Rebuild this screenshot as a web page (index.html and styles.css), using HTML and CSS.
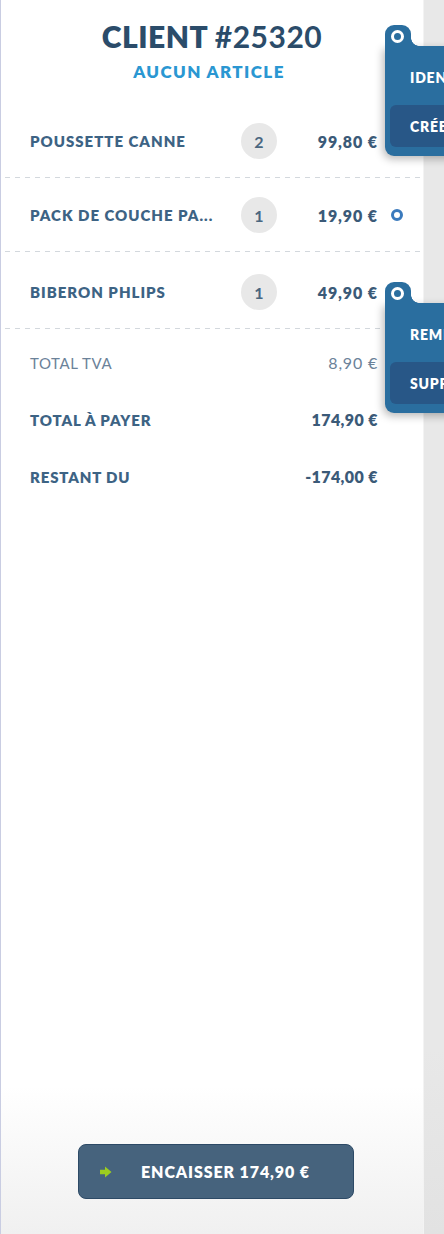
FILE: index.html
```html
<!DOCTYPE html>
<html lang="fr">
<head>
<meta charset="utf-8">
<title>Client #25320</title>
<link rel="stylesheet" href="styles.css">
</head>
<body>
<div class="page">
  <section class="panel">
    <header class="head">
      <h1 class="title">CLIENT <span class="num">#25320</span></h1>
      <p class="subtitle">AUCUN ARTICLE</p>
    </header>

    <ul class="items">
      <li class="item">
        <span class="name">POUSSETTE CANNE</span>
        <span class="qty">2</span>
        <span class="price">99,80 €</span>
        <span class="ring"></span>
      </li>
      <li class="item">
        <span class="name">PACK DE COUCHE PA...</span>
        <span class="qty">1</span>
        <span class="price">19,90 €</span>
        <span class="ring"></span>
      </li>
      <li class="item">
        <span class="name">BIBERON PHLIPS</span>
        <span class="qty">1</span>
        <span class="price">49,90 €</span>
        <span class="ring"></span>
      </li>
    </ul>

    <div class="totals">
      <div class="total light"><span>TOTAL TVA</span><span>8,90 €</span></div>
      <div class="total"><span>TOTAL À PAYER</span><span>174,90 €</span></div>
      <div class="total"><span>RESTANT DU</span><span>-174,00 €</span></div>
    </div>

    <div class="footer">
      <button class="pay" type="button">
        <svg class="arrow" width="12" height="12" viewBox="0 0 12 12" aria-hidden="true">
          <path d="M0 3.8H5V0.5L11.5 6L5 11.5V8.2H0Z" fill="#9ccd1f"/>
        </svg>
        <span class="pay-label">ENCAISSER 174,90 €</span>
      </button>
    </div>
  </section>
  <div class="side"></div>

  <div class="popover pop-client">
    <span class="tab"><span class="tab-ring"></span></span>
    <span class="pop-item">IDENTIFIER</span>
    <span class="pop-item dark">CRÉER</span>
  </div>

  <div class="popover pop-line">
    <span class="tab"><span class="tab-ring"></span></span>
    <span class="pop-item">REMISE</span>
    <span class="pop-item dark">SUPPRIMER</span>
  </div>
</div>
</body>
</html>
```

FILE: styles.css
```css
* { box-sizing: border-box; }

html, body {
  margin: 0;
  padding: 0;
}

body {
  font-family: Lato, "Noto Sans", "Liberation Sans", sans-serif;
  background: #e9e9e9;
}

.page {
  position: relative;
  display: flex;
  width: 444px;
  height: 1234px;
  overflow: hidden;
}

.panel {
  width: 423px;
  flex: none;
  display: flex;
  flex-direction: column;
  border-left: 1px solid #c9cde2;
  background: linear-gradient(to bottom, #ffffff 0, #ffffff 88%, #f0f0f0 100%);
}

.side {
  flex: 1;
  border-left: 1px solid #f3f3f3;
  background: linear-gradient(to bottom, #e8e8e8 0, #e8e8e8 85%, #e2e2e2 100%);
}

/* header */
.head {
  text-align: center;
  padding-top: 17px;
}

.title {
  margin: 0;
  font-size: 30px;
  line-height: 38px;
  font-weight: 800;
  letter-spacing: 0.5px;
  color: #2b4c6a;
}

.title .num {
  font-weight: 700;
}

.subtitle {
  margin: 6px 0 0;
  padding-right: 6px;
  font-size: 17px;
  line-height: 22px;
  font-weight: 800;
  letter-spacing: 1.4px;
  color: #2a97d2;
}

/* items */
.items {
  list-style: none;
  margin: 21px 0 0;
  padding: 0;
}

.item {
  display: flex;
  align-items: center;
  height: 74px;
  margin-left: 4px;
  padding: 0 20px 0 25px;
  background-image: repeating-linear-gradient(to right, #d3d8dd 0, #d3d8dd 5px, transparent 5px, transparent 10px);
  background-size: 100% 1px;
  background-repeat: no-repeat;
  background-position: left bottom;
}

.item:last-child {
  height: 77px;
  padding-top: 3px;
}

.name {
  flex: 1;
  font-size: 15px;
  font-weight: 800;
  letter-spacing: 1px;
  color: #3d6384;
  white-space: nowrap;
}

.qty {
  width: 36px;
  height: 36px;
  flex: none;
  border-radius: 50%;
  background: #e8e8e8;
  color: #4a6780;
  font-size: 16px;
  font-weight: 700;
  display: flex;
  align-items: center;
  justify-content: center;
}

.price {
  width: 101px;
  flex: none;
  text-align: right;
  font-size: 16px;
  font-weight: 800;
  letter-spacing: 0.9px;
  color: #3b5a78;
  white-space: nowrap;
}

.ring {
  width: 12px;
  height: 12px;
  flex: none;
  margin-left: 13px;
  border: 3px solid #3a7abd;
  border-radius: 50%;
}

/* totals */
.totals {
  padding: 5px 45px 0 29px;
}

.total {
  display: flex;
  justify-content: space-between;
  align-items: center;
  height: 57px;
  font-size: 15px;
  font-weight: 800;
  letter-spacing: 0.85px;
  color: #3d6384;
}

.total span:last-child {
  color: #3b5a78;
  font-size: 16px;
  letter-spacing: 0.4px;
}

.total.light {
  font-weight: 400;
  letter-spacing: 0.6px;
  color: #6b8299;
}

.total.light span:last-child {
  color: #6b8299;
  letter-spacing: 0.8px;
}

/* footer */
.footer {
  margin-top: auto;
  padding: 0 0 35px 77px;
}

.pay {
  display: flex;
  align-items: center;
  width: 276px;
  height: 55px;
  padding: 0 14px 0 21px;
  border: 1px solid #2d4a66;
  border-radius: 8px;
  background: #46637d;
  color: #ffffff;
  font-family: inherit;
  font-size: 16px;
  font-weight: 800;
  letter-spacing: 0.9px;
  cursor: pointer;
}

.arrow {
  flex: none;
}

.pay-label {
  flex: 1;
  text-align: center;
}

/* popovers */
.popover {
  position: absolute;
  left: 385px;
  width: 110px;
  height: 110px;
  background: #2a6e9f;
  border-radius: 0 0 0 9px;
  box-shadow: -2px 3px 8px rgba(0, 0, 0, 0.28);
  display: flex;
  flex-direction: column;
}

.pop-client { top: 46px; }
.pop-line { top: 303px; }

.tab {
  position: absolute;
  left: 0;
  top: -21px;
  width: 26px;
  height: 22px;
  background: #2a6e9f;
  border-radius: 9px 9px 0 0;
}

.tab::after {
  content: "";
  position: absolute;
  left: 26px;
  bottom: 1px;
  width: 8px;
  height: 8px;
  background: radial-gradient(circle at 100% 0, transparent 7.5px, #2a6e9f 8px);
}

.tab-ring {
  position: absolute;
  left: 6px;
  top: 5px;
  width: 13px;
  height: 13px;
  border: 3px solid #ffffff;
  border-radius: 50%;
}

.pop-item {
  display: flex;
  align-items: center;
  white-space: nowrap;
  color: #ffffff;
  font-size: 14px;
  font-weight: 800;
  letter-spacing: 0.8px;
  height: 42px;
  padding-left: 25px;
  margin-top: 10px;
}

.pop-item.dark {
  margin: 7px 0 0 5px;
  padding-left: 20px;
  background: #285787;
  border-radius: 6px 0 0 6px;
}
```
